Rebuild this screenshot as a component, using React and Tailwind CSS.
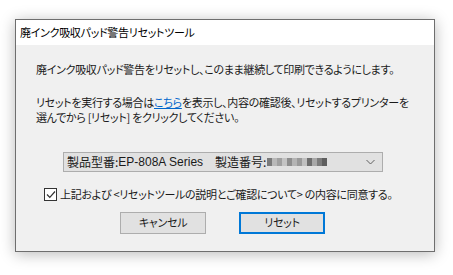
import React from "react";

const jp = "font-['Noto_Sans_CJK_JP',sans-serif] [font-feature-settings:'palt']";
const ui = "text-[11px] tracking-[-0.3px] whitespace-nowrap";

// pixelated (mosaic) serial number blocks
const blur = [
  "#7a7a7a", "#b8b8b8", "#a0a0a0", "#c4c4c4", "#8e8e8e", "#b4b4b4",
  "#9a9a9a", "#c0c0c0", "#6e6e6e", "#a8a8a8", "#7c7c7c", "#5e5e5e",
];

export default function App() {
  return (
    <div className={`w-[453px] h-[275px] bg-white pt-[19px] pl-[15px] text-[#1a1a1a] ${jp}`}>
      <div className="w-[420px] h-[233px] border border-[#6e6e6e] bg-[#f0f0f0] shadow-[0_2px_14px_rgba(0,0,0,0.28)] flex flex-col">
        {/* title bar */}
        <div className={`h-[25px] bg-white flex items-center pl-[4px] text-black ${ui}`}>
          廃インク吸収パッド警告リセットツール
        </div>

        <div className={`pl-[20px] leading-[15px] ${ui}`}>
          <p className="mt-[17px]">廃インク吸収パッド警告をリセットし、このまま継続して印刷できるようにします。</p>
          <p className="mt-[18px]">
            リセットを実行する場合は<span className="text-[#0066cc] underline">こちら</span>を表示し、内容の確認後、リセットするプリンターを
            <br />
            選んでから [リセット] をクリックしてください。
          </p>
        </div>

        {/* combobox */}
        <div className="mt-[27px] ml-[47px] w-[320px] h-[20px] border border-[#adadad] bg-[#e1e1e1] flex items-center pl-[3px] pr-[6px] text-[12px] whitespace-nowrap">
          <span>製品型番:</span>
          <span className="font-['Liberation_Sans',sans-serif] text-[12px]">EP-808A Series</span>
          <span className="ml-[12px]">製造番号:</span>
          <div className="flex shrink-0 ml-[1px] w-[60px] h-[8px]">
            {blur.map((c, i) => (
              <span key={i} className="block shrink-0 w-[5px] h-[8px]" style={{ background: c }} />
            ))}
          </div>
          <div className="flex-1" />
          <svg width="9" height="6" viewBox="0 0 9 6" className="mr-[1px]">
            <path d="M0.5 1 L4.5 5 L8.5 1" fill="none" stroke="#606060" strokeWidth="1" />
          </svg>
        </div>

        {/* checkbox */}
        <div className={`mt-[14px] ml-[28px] flex items-center ${ui}`}>
          <div className="w-[13px] h-[13px] border border-[#333333] bg-white flex items-center justify-center">
            <svg width="10" height="9" viewBox="0 0 10 9">
              <path d="M1 4.5 L3.8 7.3 L9 1.5" fill="none" stroke="#333333" strokeWidth="1.2" />
            </svg>
          </div>
          <span className="ml-[3px]">上記および &lt;リセットツールの説明とご確認について&gt; の内容に同意する。</span>
        </div>

        {/* buttons */}
        <div className={`mt-[9px] ml-[104px] flex gap-[33px] ${ui}`}>
          <button className="w-[86px] h-[22px] border border-[#adadad] bg-[#e1e1e1] flex items-center justify-center">
            キャンセル
          </button>
          <button className="w-[86px] h-[22px] border-2 border-[#0078d7] bg-[#e1e1e1] flex items-center justify-center">
            リセット
          </button>
        </div>
      </div>
    </div>
  );
}
